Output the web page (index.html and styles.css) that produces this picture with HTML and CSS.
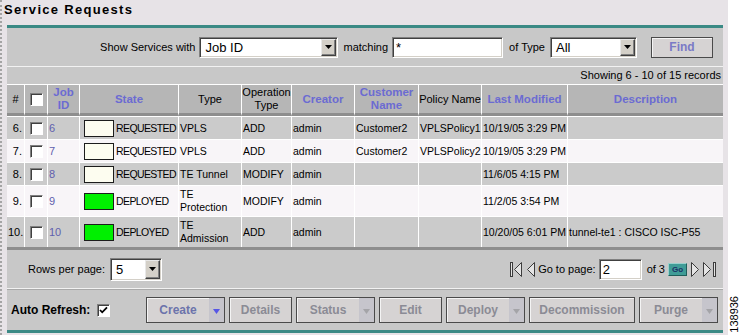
FILE: index.html
```html
<!DOCTYPE html>
<html>
<head>
<meta charset="utf-8">
<link rel="stylesheet" href="styles.css">
</head>
<body>
<div class="page">
  <h1 class="title">Service Requests</h1>
  <div class="panel">
    <div class="filter">
      <span class="lbl">Show Services with</span>
      <div class="sel sel-job"><span class="val">Job ID</span><span class="arr"><svg width="7" height="4" viewBox="0 0 7 4"><path d="M0 0H7L3.5 4Z" fill="#000"/></svg></span></div>
      <span class="lbl lbl-m">matching</span>
      <div class="inp inp-match">*</div>
      <span class="lbl lbl-t">of Type</span>
      <div class="sel sel-type"><span class="val">All</span><span class="arr"><svg width="7" height="4" viewBox="0 0 7 4"><path d="M0 0H7L3.5 4Z" fill="#000"/></svg></span></div>
      <div class="btn btn-find">Find</div>
    </div>
    <div class="showing">Showing 6 - 10 of 15 records</div>
    <table class="grid">
      <colgroup>
        <col class="c-num"><col class="c-cb"><col class="c-id"><col class="c-state"><col class="c-type"><col class="c-op"><col class="c-cre"><col class="c-cus"><col class="c-pol"><col class="c-mod"><col class="c-desc">
      </colgroup>
      <thead>
        <tr>
          <th class="plain">#</th>
          <th><span class="cb"></span></th>
          <th class="sort">Job<br>ID</th>
          <th class="sort">State</th>
          <th class="plain">Type</th>
          <th class="plain">Operation<br>Type</th>
          <th class="sort">Creator</th>
          <th class="sort">Customer<br>Name</th>
          <th class="plain">Policy Name</th>
          <th class="sort">Last Modified</th>
          <th class="sort">Description</th>
        </tr>
      </thead>
      <tbody>
        <tr class="odd">
          <td class="num">6.</td><td class="cbc"><span class="cb"></span></td><td><span class="link">6</span></td>
          <td><span class="st"><span class="box req"></span><span class="stt">REQUESTED</span></span></td>
          <td>VPLS</td><td>ADD</td><td>admin</td><td>Customer2</td><td>VPLSPolicy1</td><td>10/19/05 3:29 PM</td><td></td>
        </tr>
        <tr class="even">
          <td class="num">7.</td><td class="cbc"><span class="cb"></span></td><td><span class="link">7</span></td>
          <td><span class="st"><span class="box req"></span><span class="stt">REQUESTED</span></span></td>
          <td>VPLS</td><td>ADD</td><td>admin</td><td>Customer2</td><td>VPLSPolicy2</td><td>10/19/05 3:29 PM</td><td></td>
        </tr>
        <tr class="odd">
          <td class="num">8.</td><td class="cbc"><span class="cb"></span></td><td><span class="link">8</span></td>
          <td><span class="st"><span class="box req"></span><span class="stt">REQUESTED</span></span></td>
          <td>TE Tunnel</td><td>MODIFY</td><td>admin</td><td></td><td></td><td>11/6/05 4:15 PM</td><td></td>
        </tr>
        <tr class="even tall">
          <td class="num">9.</td><td class="cbc"><span class="cb"></span></td><td><span class="link">9</span></td>
          <td><span class="st"><span class="box dep"></span><span class="stt">DEPLOYED</span></span></td>
          <td>TE<br>Protection</td><td>MODIFY</td><td>admin</td><td></td><td></td><td>11/2/05 3:54 PM</td><td></td>
        </tr>
        <tr class="odd tall">
          <td class="num">10.</td><td class="cbc"><span class="cb"></span></td><td><span class="link">10</span></td>
          <td><span class="st"><span class="box dep"></span><span class="stt">DEPLOYED</span></span></td>
          <td>TE<br>Admission</td><td>ADD</td><td>admin</td><td></td><td></td><td>10/20/05 6:01 PM</td><td>tunnel-te1 : CISCO ISC-P55</td>
        </tr>
      </tbody>
    </table>
    <div class="pager">
      <div class="rpp">
        <span class="lbl">Rows per page:</span>
        <div class="sel sel-rows"><span class="val">5</span><span class="arr"><svg width="7" height="4" viewBox="0 0 7 4"><path d="M0 0H7L3.5 4Z" fill="#000"/></svg></span></div>
      </div>
      <div class="nav">
        <svg class="ico ico-first" width="12" height="15" viewBox="0 0 12 15"><rect x="0.5" y="0.5" width="2" height="14" fill="#e4e4e4" stroke="#3c3c3c"/><path d="M11.5 0.5V14.5L4.5 7.5Z" fill="#e4e4e4" stroke="#3c3c3c" stroke-linejoin="round"/></svg>
        <svg class="ico ico-prev" width="8" height="15" viewBox="0 0 8 15"><path d="M7.5 0.5V14.5L0.5 7.5Z" fill="#e4e4e4" stroke="#3c3c3c" stroke-linejoin="round"/></svg>
        <span class="lbl lbl-go">Go to page:</span>
        <div class="inp inp-page">2</div>
        <span class="lbl lbl-of">of 3</span>
        <div class="gobtn">Go</div>
        <svg class="ico ico-next" width="8" height="15" viewBox="0 0 8 15"><path d="M0.5 0.5V14.5L7.5 7.5Z" fill="#e4e4e4" stroke="#3c3c3c" stroke-linejoin="round"/></svg>
        <svg class="ico ico-last" width="14" height="15" viewBox="0 0 14 15"><path d="M0.5 0.5V14.5L7.5 7.5Z" fill="#e4e4e4" stroke="#3c3c3c" stroke-linejoin="round"/><rect x="10.5" y="0.5" width="2" height="14" fill="#e4e4e4" stroke="#3c3c3c"/></svg>
      </div>
    </div>
    <div class="actions">
      <div class="auto">
        <span class="auto-lbl">Auto Refresh:</span>
        <span class="cb cb-on"><svg width="9" height="9" viewBox="0 0 9 9"><path d="M1 4L3.2 6.3L8 1.3" fill="none" stroke="#000" stroke-width="1.8"/></svg></span>
      </div>
      <div class="btns">
        <div class="btn act w79 drop on"><span class="bl">Create</span><span class="dd"><svg width="7" height="5" viewBox="0 0 7 5"><path d="M0 0H7L3.5 5Z" fill="#5656e6"/></svg></span></div>
        <div class="btn act w63"><span class="bl">Details</span></div>
        <div class="btn act w79 drop"><span class="bl">Status</span><span class="dd"><svg width="7" height="5" viewBox="0 0 7 5"><path d="M0 0H7L3.5 5Z" fill="#a4a4a8"/></svg></span></div>
        <div class="btn act w63"><span class="bl">Edit</span></div>
        <div class="btn act w79 drop"><span class="bl">Deploy</span><span class="dd"><svg width="7" height="5" viewBox="0 0 7 5"><path d="M0 0H7L3.5 5Z" fill="#a4a4a8"/></svg></span></div>
        <div class="btn act w106"><span class="bl">Decommission</span></div>
        <div class="btn act w79 drop"><span class="bl">Purge</span><span class="dd"><svg width="7" height="5" viewBox="0 0 7 5"><path d="M0 0H7L3.5 5Z" fill="#a4a4a8"/></svg></span></div>
      </div>
    </div>
  </div>
</div>
<div class="side"><span class="fig">138936</span></div>
</body>
</html>
```

FILE: styles.css
```css
* { box-sizing: border-box; }
html, body { margin: 0; padding: 0; }
body {
  width: 742px;
  height: 335px;
  overflow: hidden;
  background: #fff;
  display: flex;
  font-family: "Liberation Sans", Arial, sans-serif;
  font-size: 11px;
  color: #000;
}
.page {
  width: 728px;
  height: 335px;
  background: #e7e3e7;
  border-left: 2px dotted #a4a4a4;
  padding-top: 2px;
}
.title {
  margin: 0 0 7px 2px;
  font-size: 13px;
  line-height: 16px;
  font-weight: bold;
  letter-spacing: 1.3px;
}
.panel {
  margin-left: 5px;
  width: 716px;
  background: #c8c8c8;
  border-top: 3px solid #3b8a85;
  border-bottom: 3px solid #3b8a85;
}

/* filter row */
.filter {
  height: 39px;
  display: flex;
  align-items: center;
  justify-content: flex-end;
  padding-right: 10px;
  border-bottom: 1px solid #f2f2f2;
}
.lbl { white-space: nowrap; }
.sel, .inp {
  height: 21px;
  background: #fff;
  border: 1px solid;
  border-color: #808080 #fff #fff #808080;
  box-shadow: inset 1px 1px #404040, inset -1px -1px #d4d0c8;
  font-size: 13px;
  display: flex;
  align-items: center;
}
.sel .val { flex: 1; padding-left: 5px; }
.sel .arr {
  width: 15px;
  height: 17px;
  margin: 0 1px 0 0;
  background: #d4d0c8;
  border: 1px solid;
  border-color: #e8e8e8 #404040 #404040 #e8e8e8;
  box-shadow: inset -1px -1px #808080;
  display: flex;
  align-items: center;
  justify-content: center;
}
.sel-job { width: 139px; margin-left: 4px; }
.lbl-m { margin-left: 5px; }
.inp { padding-left: 3px; }
.inp-match { width: 111px; margin-left: 4px; }
.lbl-t { margin-left: 6px; }
.sel-type { width: 87px; margin-left: 5px; }
.btn {
  background: #d6d3d3;
  border: 1px solid #4a4a4a;
  box-shadow: inset 1px 1px #f4f4f4;
  font-weight: bold;
  display: flex;
  align-items: center;
  justify-content: center;
}
.btn-find {
  width: 62px;
  height: 21px;
  margin-left: 14px;
  font-size: 12px;
  color: #7a7ac6;
}

.showing {
  height: 17px;
  line-height: 17px;
  text-align: right;
  padding-right: 2px;
}

/* table */
.grid {
  width: 716px;
  table-layout: fixed;
  border-collapse: separate;
  border-spacing: 0;
  border-bottom: 3px solid #8e8e8e;
}
.c-num { width: 17px; }
.c-cb { width: 23px; }
.c-id { width: 32px; }
.c-state { width: 99px; }
.c-type { width: 63px; }
.c-op { width: 50px; }
.c-cre { width: 63px; }
.c-cus { width: 64px; }
.c-pol { width: 63px; }
.c-mod { width: 86px; }
.c-desc { width: 156px; }
.grid th, .grid td {
  border-top: 1px solid #fff;
  border-left: 1px solid #fff;
  white-space: nowrap;
  overflow: visible;
  line-height: 13px;
  vertical-align: middle;
}
.grid th:first-child, .grid td:first-child { border-left: none; }
.grid th {
  background: #b6b6b6;
  border-bottom: 3px solid #8e8e8e;
  padding: 1px 0;
  height: 32px;
  text-align: center;
}
.grid th.plain { font-weight: normal; font-size: 11px; }
.grid th.sort { font-weight: bold; font-size: 11.5px; color: #6b6bd2; }
.grid td { padding: 2px 1px; height: 23px; text-align: left; font-size: 10.5px; }
.grid tr.tall td { height: 31px; }
.grid tr.odd td { background: #cbcbcb; }
.grid tr.even td { background: #f8f5f8; }
.grid td.num { text-align: right; padding-right: 2px; font-size: 11px; }
.grid td.cbc, .grid th:nth-child(2) { text-align: center; }
.cb {
  display: inline-block;
  width: 13px;
  height: 13px;
  background: #fff;
  border: 1px solid;
  border-color: #808080 #fff #fff #808080;
  box-shadow: inset 1px 1px #404040;
  vertical-align: middle;
}
.link { color: #5f5fae; font-size: 11px; }
.st { display: flex; align-items: center; padding-left: 3px; }
.box {
  width: 30px;
  height: 17px;
  border: 1px solid #1c1c1c;
  margin-right: 2px;
  flex: none;
}
.box.req { background: #fdfdf0; }
.box.dep { background: #00f000; }
.stt { letter-spacing: -0.6px; }

/* pager */
.pager {
  height: 39px;
  display: flex;
  align-items: center;
  justify-content: space-between;
  padding: 0 6px 0 21px;
  border-bottom: 1px solid #f2f2f2;
}
.rpp, .nav { display: flex; align-items: center; }
.sel-rows { width: 52px; height: 23px; margin-left: 5px; }
.sel-rows .arr { height: 19px; }
.ico { display: block; }
.ico-prev { margin-left: 5px; }
.lbl-go { margin-left: 3px; }
.inp-page { width: 43px; margin-left: 3px; }
.lbl-of { margin-left: 5px; }
.gobtn {
  width: 19px;
  height: 13px;
  margin-left: 3px;
  background: #3f9c97;
  border: 1px solid;
  border-color: #9ad0cc #1e5e5a #1e5e5a #9ad0cc;
  color: #1b2f66;
  font-size: 8px;
  font-weight: bold;
  display: flex;
  align-items: center;
  justify-content: center;
}
.ico-next { margin-left: 4px; }
.ico-last { margin-left: 4px; }

/* actions */
.actions {
  height: 41px;
  display: flex;
  align-items: center;
  padding-left: 4px;
  border-top: 1px solid #a9a9a9;
}
.auto { display: flex; align-items: center; width: 135px; }
.auto-lbl { font-size: 12px; font-weight: bold; }
.cb-on { margin-left: 7px; display: flex; align-items: center; justify-content: center; }
.btns { display: flex; gap: 4px; }
.btn.act {
  height: 26px;
  font-size: 12px;
  color: #8b8b95;
  padding: 0;
}
.btn.act.on { color: #6c73ab; }
.w79 { width: 79px; }
.w63 { width: 63px; }
.w106 { width: 106px; }
.btn.drop { justify-content: space-between; align-items: stretch; }
.btn.drop .bl { flex: 1; display: flex; align-items: center; justify-content: center; }
.btn.drop .dd {
  width: 15px;
  background: #c6c5cc;
  display: flex;
  align-items: center;
  justify-content: center;
  padding-top: 2px;
}

/* side figure number */
.side {
  width: 14px;
  height: 335px;
  display: flex;
  align-items: flex-end;
  padding-bottom: 2px;
}
.fig {
  writing-mode: vertical-rl;
  transform: rotate(180deg);
  font-size: 11px;
  line-height: 12px;
  color: #000;
}
```
